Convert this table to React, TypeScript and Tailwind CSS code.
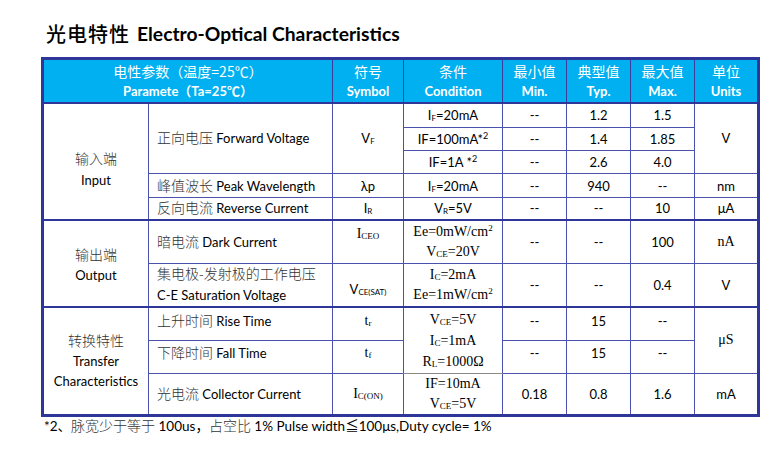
import React from 'react';

const sans = "font-['Lato','Noto_Sans_CJK_SC',sans-serif]";
const serif = "font-['Liberation_Serif','Noto_Sans_CJK_SC',serif]";

const cell = 'border border-[#4a52ad] text-center align-middle p-0';
const head = 'border border-[#3a3f9e] text-center align-middle p-0 text-white';

function Sub({ children, serif: s }: { children: React.ReactNode; serif?: boolean }) {
  return <span className={s ? 'text-[9px] leading-none align-[-1px]' : 'text-[8px] leading-none align-[-1px]'}>{children}</span>;
}

function Sup({ children }: { children: React.ReactNode }) {
  return <span className="text-[9px] leading-none align-[5px]">{children}</span>;
}

function Zh({ children }: { children: React.ReactNode }) {
  return <span className="text-[#333] text-[14px] leading-none font-['Noto_Sans_CJK_SC',sans-serif] font-light">{children}</span>;
}

function HeadCell({ zh, en, colSpan }: { zh: string; en: string; colSpan?: number }) {
  return (
    <th colSpan={colSpan} className={head}>
      <div className="font-['Noto_Sans_CJK_SC',sans-serif] font-normal text-[14px] leading-[20px] pt-[1px]">{zh}</div>
      <div className="font-bold text-[13px] leading-[20px]">{en}</div>
    </th>
  );
}

export default function App() {
  return (
    <div className={`w-[784px] h-[452px] bg-white ${sans} text-[13px] leading-[18px] text-black`}>
      <div className="pl-[46px] pt-[28px] h-[40px] flex items-center gap-[7px]">
        <span className="text-[20px] leading-none font-['Noto_Sans_CJK_SC',sans-serif] font-medium tracking-[1px]">光电特性</span>
        <span className="text-[19.3px] leading-none font-bold">Electro-Optical Characteristics</span>
      </div>
      <div className="pl-[41px] pt-[17px]">
        <table className="table-fixed border-collapse border-[3px] border-[#2f3699] w-[716px]">
          <colgroup>
            <col className="w-[106px]" />
            <col className="w-[184px]" />
            <col className="w-[71px]" />
            <col className="w-[99px]" />
            <col className="w-[64px]" />
            <col className="w-[64px]" />
            <col className="w-[64px]" />
            <col className="w-[64px]" />
          </colgroup>
          <thead className="bg-[#00b0f0] border-b-2 border-[#2f3699]">
            <tr className="h-[44px]">
              <HeadCell colSpan={2} zh="电性参数（温度=25℃）" en="Paramete（Ta=25℃）" />
              <HeadCell zh="符号" en="Symbol" />
              <HeadCell zh="条件" en="Condition" />
              <HeadCell zh="最小值" en="Min." />
              <HeadCell zh="典型值" en="Typ." />
              <HeadCell zh="最大值" en="Max." />
              <HeadCell zh="单位" en="Units" />
            </tr>
          </thead>
          <tbody className="border-t-2 border-[#2f3699]">
            <tr className="h-[25px]">
              <td rowSpan={5} className={`${cell} pt-[17px] leading-[21px]`}>
                <div><Zh>输入端</Zh></div>
                <div>Input</div>
              </td>
              <td rowSpan={3} className={`${cell} text-left pl-[8px]`}>
                <Zh>正向电压</Zh> Forward Voltage
              </td>
              <td rowSpan={3} className={cell}>V<Sub>F</Sub></td>
              <td className={cell}>I<Sub>F</Sub>=20mA</td>
              <td className={cell}>--</td>
              <td className={cell}>1.2</td>
              <td className={cell}>1.5</td>
              <td rowSpan={3} className={cell}>V</td>
            </tr>
            <tr className="h-[23px]">
              <td className={cell}>IF=100mA*<Sup>2</Sup></td>
              <td className={cell}>--</td>
              <td className={cell}>1.4</td>
              <td className={cell}>1.85</td>
            </tr>
            <tr className="h-[23px]">
              <td className={cell}>IF=1A *<Sup>2</Sup></td>
              <td className={cell}>--</td>
              <td className={cell}>2.6</td>
              <td className={cell}>4.0</td>
            </tr>
            <tr className="h-[24px]">
              <td className={`${cell} text-left pl-[8px]`}>
                <Zh>峰值波长</Zh> Peak Wavelength
              </td>
              <td className={cell}>λp</td>
              <td className={cell}>I<Sub>F</Sub>=20mA</td>
              <td className={cell}>--</td>
              <td className={cell}>940</td>
              <td className={cell}>--</td>
              <td className={cell}>nm</td>
            </tr>
            <tr className="h-[22px]">
              <td className={`${cell} text-left pl-[8px]`}>
                <Zh>反向电流</Zh> Reverse Current
              </td>
              <td className={cell}>I<Sub>R</Sub></td>
              <td className={cell}>V<Sub>R</Sub>=5V</td>
              <td className={cell}>--</td>
              <td className={cell}>--</td>
              <td className={cell}>10</td>
              <td className={cell}>μA</td>
            </tr>
          </tbody>
          <tbody className="border-t-2 border-[#2f3699]">
            <tr className="h-[44px]">
              <td rowSpan={2} className={`${cell} pt-[4px] leading-[20px]`}>
                <div><Zh>输出端</Zh></div>
                <div>Output</div>
              </td>
              <td className={`${cell} text-left pl-[8px]`}>
                <Zh>暗电流</Zh> Dark Current
              </td>
              <td className={`${cell} ${serif} text-[14px] align-top pt-[4px]`}>I<Sub serif>CEO</Sub></td>
              <td className={`${cell} ${serif} text-[14px] leading-[20px]`}>
                <div>Ee=0mW/cm<Sup>2</Sup></div>
                <div>V<Sub serif>CE</Sub>=20V</div>
              </td>
              <td className={cell}>--</td>
              <td className={cell}>--</td>
              <td className={cell}>100</td>
              <td className={`${cell} ${serif} text-[14px]`}>nA</td>
            </tr>
            <tr className="h-[42px]">
              <td className={`${cell} text-left pl-[8px] leading-[21px]`}>
                <div><Zh>集电极-发射极的工作电压</Zh></div>
                <div>C-E Saturation Voltage</div>
              </td>
              <td className={`${cell} pt-[8px]`}>V<Sub>CE(SAT)</Sub></td>
              <td className={`${cell} ${serif} text-[14px] leading-[20px]`}>
                <div>I<Sub serif>C</Sub>=2mA</div>
                <div>Ee=1mW/cm<Sup>2</Sup></div>
              </td>
              <td className={cell}>--</td>
              <td className={cell}>--</td>
              <td className={cell}>0.4</td>
              <td className={cell}>V</td>
            </tr>
          </tbody>
          <tbody className="border-t-2 border-[#2f3699]">
            <tr className="h-[33px]">
              <td rowSpan={3} className={`${cell} leading-[20px]`}>
                <div><Zh>转换特性</Zh></div>
                <div>Transfer</div>
                <div>Characteristics</div>
              </td>
              <td className={`${cell} text-left pl-[8px] pb-[5px]`}>
                <Zh>上升时间</Zh> Rise Time
              </td>
              <td className={`${cell} ${serif} text-[14px] pb-[5px]`}>t<Sub serif>r</Sub></td>
              <td rowSpan={2} className={`${cell} ${serif} text-[14px] leading-[21px] border-b-[#8a8a8a]`}>
                <div>V<Sub serif>CE</Sub>=5V</div>
                <div>I<Sub serif>C</Sub>=1mA</div>
                <div>R<Sub serif>L</Sub>=1000Ω</div>
              </td>
              <td className={`${cell} pb-[5px]`}>--</td>
              <td className={`${cell} pb-[5px]`}>15</td>
              <td className={`${cell} pb-[5px]`}>--</td>
              <td rowSpan={2} className={`${cell} ${serif} text-[14px]`}>μS</td>
            </tr>
            <tr className="h-[33px]">
              <td className={`${cell} text-left pl-[8px] pb-[8px]`}>
                <Zh>下降时间</Zh> Fall Time
              </td>
              <td className={`${cell} ${serif} text-[14px] pb-[8px]`}>t<Sub serif>f</Sub></td>
              <td className={`${cell} pb-[8px]`}>--</td>
              <td className={`${cell} pb-[8px]`}>15</td>
              <td className={`${cell} pb-[8px]`}>--</td>
            </tr>
            <tr className="h-[42px]">
              <td className={`${cell} text-left pl-[8px]`}>
                <Zh>光电流</Zh> Collector Current
              </td>
              <td className={`${cell} ${serif} text-[14px]`}>I<Sub serif>C(ON)</Sub></td>
              <td className={`${cell} ${serif} text-[14px] leading-[20px]`}>
                <div>IF=10mA</div>
                <div>V<Sub serif>CE</Sub>=5V</div>
              </td>
              <td className={cell}>0.18</td>
              <td className={cell}>0.8</td>
              <td className={cell}>1.6</td>
              <td className={cell}>mA</td>
            </tr>
          </tbody>
        </table>
        <div className="pl-[3px] pt-0 text-[13.5px] leading-[18px]">
          *2、<Zh>脉宽少于等于</Zh> 100us，<Zh>占空比</Zh> 1% Pulse width≦100μs,Duty cycle= 1%
        </div>
      </div>
    </div>
  );
}
